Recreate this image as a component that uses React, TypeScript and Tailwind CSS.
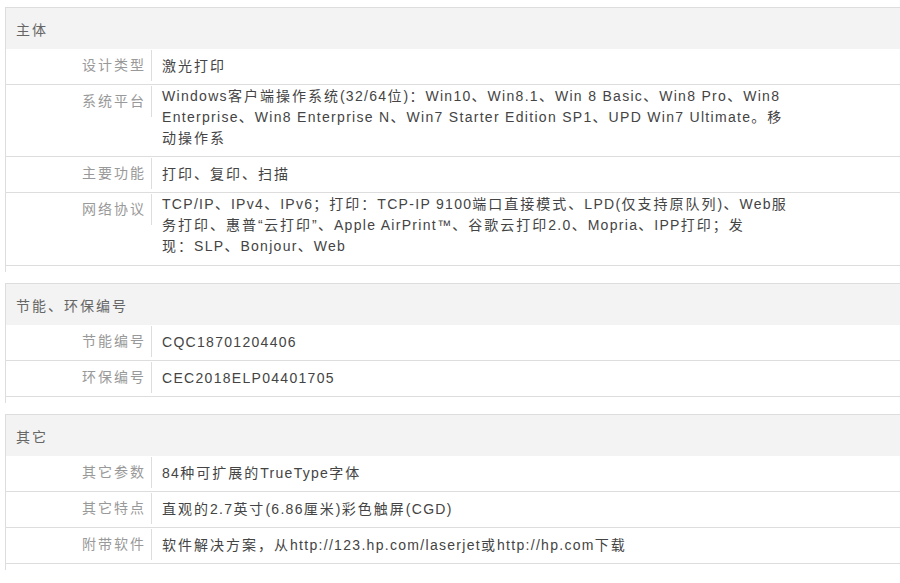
import React from "react";

type Row = { label: string; lines: string[] };
type Section = { title: string; rows: Row[] };

const sections: Section[] = [
  {
    title: "主体",
    rows: [
      { label: "设计类型", lines: ["激光打印"] },
      {
        label: "系统平台",
        lines: [
          "Windows客户端操作系统(32/64位)：Win10、Win8.1、Win 8 Basic、Win8 Pro、Win8",
          "Enterprise、Win8 Enterprise N、Win7 Starter Edition SP1、UPD Win7 Ultimate。移",
          "动操作系",
        ],
      },
      { label: "主要功能", lines: ["打印、复印、扫描"] },
      {
        label: "网络协议",
        lines: [
          "TCP/IP、IPv4、IPv6；打印：TCP-IP 9100端口直接模式、LPD(仅支持原队列)、Web服",
          "务打印、惠普“云打印”、Apple AirPrint™、谷歌云打印2.0、Mopria、IPP打印；发",
          "现：SLP、Bonjour、Web",
        ],
      },
    ],
  },
  {
    title: "节能、环保编号",
    rows: [
      { label: "节能编号", lines: ["CQC18701204406"] },
      { label: "环保编号", lines: ["CEC2018ELP04401705"] },
    ],
  },
  {
    title: "其它",
    rows: [
      { label: "其它参数", lines: ["84种可扩展的TrueType字体"] },
      { label: "其它特点", lines: ["直观的2.7英寸(6.86厘米)彩色触屏(CGD)"] },
      { label: "附带软件", lines: ["软件解决方案，从http://123.hp.com/laserjet或http://hp.com下载"] },
    ],
  },
];

// CJK runs get a little more tracking than latin runs
const CJK = /([\u2E80-\u9FFF\u3000-\u303F\uFF00-\uFFEF]+)/;

const Mixed: React.FC<{ text: string }> = ({ text }) => (
  <>
    {text.split(CJK).map((part, i) =>
      part === "" ? null : (
        <span key={i} className={CJK.test(part) ? "tracking-[2px]" : "tracking-[1.3px]"}>
          {part}
        </span>
      )
    )}
  </>
);

const SpecRow: React.FC<{ row: Row }> = ({ row }) => {
  const multi = row.lines.length > 1;
  return (
    <div className="flex items-start border-b border-[#dddddd]">
      {/* label cell */}
      <div className="w-[146px] shrink-0 mt-[1px] h-[31px] leading-[31px] pr-[5px] text-right text-[#999999] tracking-[2px] border-r border-[#dddddd]">
        {row.label}
      </div>

      {/* value */}
      <div
        className={`pl-[10px] text-[#444444] whitespace-nowrap ${
          multi ? "pt-[1px] pb-[8px] leading-[20.75px]" : "leading-[35px]"
        }`}
      >
        {row.lines.map((l, i) => (
          <div key={i}>
            <Mixed text={l} />
          </div>
        ))}
      </div>
    </div>
  );
};

export default function App() {
  return (
    <div className="w-[900px] h-[583px] overflow-hidden bg-white pt-[7px] pl-[5px] text-[14px] font-['Liberation_Sans','Noto_Sans_CJK_SC',sans-serif]">
      {sections.map((s) => (
        <div key={s.title} className="w-[900px] border-t border-l border-[#dddddd] pb-[6px] mb-[11px]">
          {/* Section header */}
          <div className="h-[41px] leading-[44px] pl-[10px] bg-[#f3f3f3] text-[#666666] tracking-[2px]">{s.title}</div>
          {s.rows.map((r) => (
            <SpecRow key={r.label} row={r} />
          ))}
        </div>
      ))}
    </div>
  );
}
